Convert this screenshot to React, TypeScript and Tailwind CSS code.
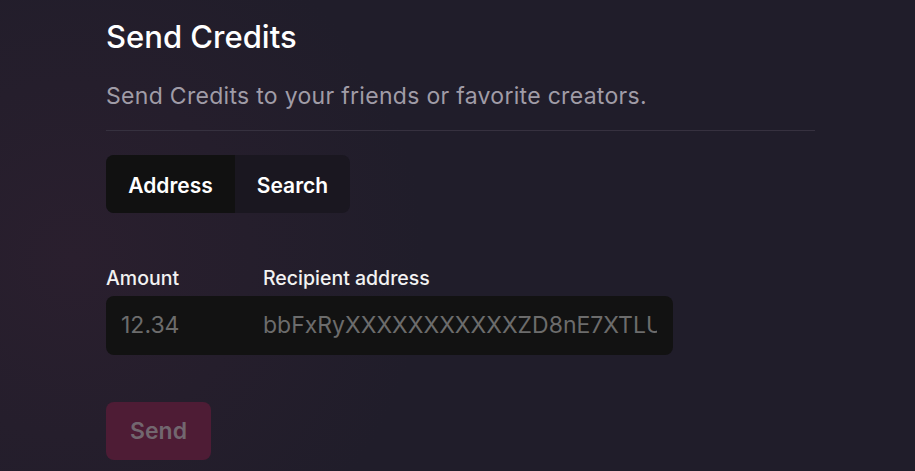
import React, { useState } from 'react';

const App: React.FC = () => {
    const [tab, setTab] = useState<'address' | 'search'>('address');

    return (
        <div
            className="min-h-screen w-full bg-[#201d2a] bg-[radial-gradient(circle_at_8%_55%,#2a1f2e_0%,transparent_40%)] text-white pt-[19px] pl-[106px]"
            style={{ fontFamily: 'Inter, "Noto Sans", sans-serif' }}
        >
            <div className="w-[709px]">
                <h1 className="text-[31px] leading-[36px] font-medium text-white">Send Credits</h1>
                <p className="mt-[27px] text-[23px] leading-[28px] tracking-[0.3px] text-[#a09ca7]">
                    Send Credits to your friends or favorite creators.
                </p>
                <div className="mt-[20px] h-px bg-[#36313f]" />

                {/* Tabs */}
                <div className="mt-[24px] inline-flex h-[58px] rounded-lg bg-[#1a1720] overflow-hidden">
                    {(['address', 'search'] as const).map((t) => (
                        <button
                            key={t}
                            onClick={() => setTab(t)}
                            className={`h-full pt-[3px] text-[21px] font-semibold text-white ${
                                t === 'address' ? 'w-[129px]' : 'w-[115px]'
                            } ${tab === t ? 'bg-[#111111]' : 'bg-transparent'}`}
                        >
                            {t === 'address' ? 'Address' : 'Search'}
                        </button>
                    ))}
                </div>

                {/* Fields */}
                <div className="mt-[53px] flex text-[19.5px] leading-[24px] font-medium text-[#f2f2f2]">
                    <span className="w-[157px]">Amount</span>
                    <span>Recipient address</span>
                </div>
                <div className="mt-[6px] flex h-[59px] w-[567px] items-center rounded-lg bg-[#121212]">
                    <input
                        placeholder="12.34"
                        className="w-[157px] bg-transparent pl-[15px] text-[23px] text-white outline-none placeholder:text-[#6c6c6c]"
                    />
                    <input
                        placeholder="bbFxRyXXXXXXXXXXXZD8nE7XTLUh3nPHvPyAn"
                        className="flex-1 min-w-0 mr-[16px] bg-transparent text-[23px] text-white outline-none placeholder:text-[#6c6c6c]"
                    />
                </div>

                <button
                    disabled
                    className="mt-[47px] h-[58px] w-[105px] rounded-lg bg-[#4e1c35] text-[23px] font-semibold text-[#72676f]"
                >
                    Send
                </button>
            </div>
        </div>
    );
};

export default App;
